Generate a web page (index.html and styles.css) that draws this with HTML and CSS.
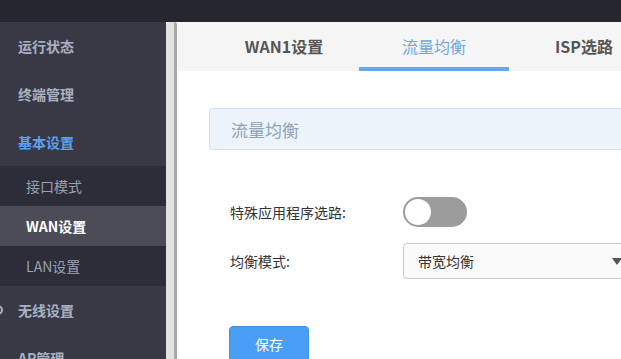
FILE: index.html
```html
<!DOCTYPE html>
<html lang="zh-CN">
<head>
<meta charset="utf-8">
<title>流量均衡</title>
<link rel="stylesheet" href="styles.css">
</head>
<body>
<div class="topbar"></div>
<div class="layout">
  <nav class="sidebar">
    <div class="nav-item">运行状态</div>
    <div class="nav-item">终端管理</div>
    <div class="nav-item active">基本设置</div>
    <div class="submenu">
      <div class="sub-item">接口模式</div>
      <div class="sub-item current">WAN设置</div>
      <div class="sub-item">LAN设置</div>
    </div>
    <div class="nav-item"><span class="nav-icon"><svg width="10" height="10" viewBox="0 0 10 10"><circle cx="5" cy="5" r="4" fill="none" stroke="#aab2c2" stroke-width="2"/></svg></span>无线设置</div>
    <div class="nav-item">AP管理</div>
  </nav>
  <div class="scroller"></div>
  <main class="main">
    <div class="tabs">
      <div class="tab">WAN1设置</div>
      <div class="tab selected">流量均衡</div>
      <div class="tab">ISP选路</div>
    </div>
    <div class="content">
      <div class="panel-title">流量均衡</div>
      <div class="form">
        <div class="row">
          <div class="label">特殊应用程序选路:</div>
          <div class="switch"><span class="knob"></span></div>
        </div>
        <div class="row">
          <div class="label">均衡模式:</div>
          <div class="select"><span>带宽均衡</span><span class="caret"></span></div>
        </div>
      </div>
      <button class="btn">保存</button>
    </div>
  </main>
</div>
</body>
</html>
```

FILE: styles.css
```css
* { box-sizing: border-box; }
html, body {
  margin: 0;
  padding: 0;
  width: 621px;
  height: 359px;
  overflow: hidden;
  background: #ffffff;
  font-family: "Noto Sans CJK SC", "Noto Sans", "Liberation Sans", sans-serif;
}
.topbar {
  height: 22px;
  background: #262631;
}
.layout {
  display: flex;
  height: 337px;
  overflow: hidden;
}
.sidebar {
  width: 166px;
  flex: none;
  background: #393946;
  display: flex;
  flex-direction: column;
}
.nav-item {
  height: 48px;
  flex: none;
  display: flex;
  align-items: center;
  padding-left: 18px;
  font-size: 14px;
  font-weight: bold;
  color: #a9b1c1;
}
.nav-item.active { color: #5d9ff0; }
.nav-icon {
  display: flex;
  margin-left: -25px;
  margin-right: 15px;
}
.submenu {
  background: #2d2d39;
  display: flex;
  flex-direction: column;
}
.sub-item {
  height: 40px;
  display: flex;
  align-items: center;
  padding-left: 26px;
  font-size: 14px;
  color: #9aa1ae;
}
.sub-item.current {
  background: #4c4c59;
  color: #ffffff;
  font-weight: bold;
}
.scroller {
  width: 11px;
  flex: none;
  background: #e2e2e2;
  border-right: 3px solid #a8a8a8;
  border-top-left-radius: 3px;
  border-top-right-radius: 3px;
}
.main {
  flex: 1;
  min-width: 0;
  display: flex;
  flex-direction: column;
  overflow: hidden;
}
.tabs {
  height: 49px;
  flex: none;
  background: #f5f5f5;
  display: flex;
  padding-left: 32px;
}
.tab {
  width: 150px;
  flex: none;
  display: flex;
  align-items: center;
  justify-content: center;
  font-size: 16px;
  font-weight: bold;
  color: #555555;
  border-bottom: 4px solid transparent;
  padding-top: 2px;
}
.tab.selected {
  color: #6aa6e6;
  font-weight: normal;
  border-bottom-color: #6aa8e8;
}
.content {
  padding: 37px 0 0 32px;
}
.panel-title {
  height: 42px;
  margin-right: -20px;
  background: #edf3fa;
  border: 1px solid #d4deea;
  border-radius: 4px;
  display: flex;
  align-items: center;
  padding-left: 21px;
  font-size: 17px;
  color: #8ea2b8;
}
.form {
  padding-top: 47px;
  display: flex;
  flex-direction: column;
  gap: 16px;
}
.row {
  display: flex;
  align-items: center;
}
.label {
  width: 194px;
  flex: none;
  padding-left: 21px;
  font-size: 14px;
  color: #333333;
}
.switch {
  width: 64px;
  height: 30px;
  border-radius: 15px;
  background: #9c9c9c;
  padding: 2px;
  display: flex;
}
.knob {
  width: 26px;
  height: 26px;
  border-radius: 50%;
  background: #ffffff;
}
.select {
  width: 230px;
  height: 36px;
  flex: none;
  border: 1px solid #cccccc;
  border-radius: 4px;
  background: #fafafa;
  display: flex;
  align-items: center;
  justify-content: space-between;
  padding: 0 10px 0 14px;
  font-size: 14px;
  color: #333333;
}
.caret {
  width: 0;
  height: 0;
  border-left: 5px solid transparent;
  border-right: 5px solid transparent;
  border-top: 7px solid #555555;
}
.btn {
  margin: 47px 0 0 20px;
  width: 80px;
  height: 36px;
  background: #4a9ff5;
  border: 1px solid #3f8fe2;
  border-radius: 4px;
  color: #ffffff;
  font-family: inherit;
  font-size: 14px;
  padding: 0;
}
```
